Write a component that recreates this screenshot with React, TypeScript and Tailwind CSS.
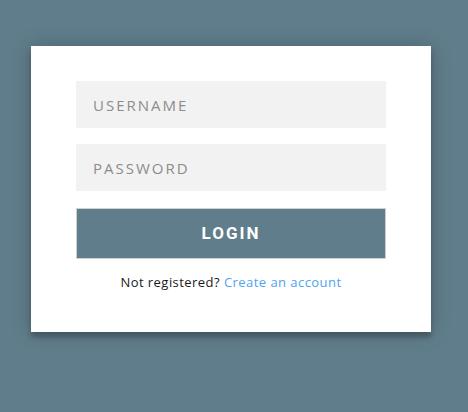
export default function App() {
  return (
    <div className="min-h-[412px] w-full bg-[#607d8b] pl-[31px] pt-[46px]">
      <div className="w-[400px] bg-white px-[45px] pt-[35px] pb-[39px] shadow-[0_0_20px_0_rgba(0,0,0,0.2),0_5px_5px_0_rgba(0,0,0,0.24)]">
        <form className="flex flex-col" onSubmit={(e) => e.preventDefault()}>
          <input
            type="text"
            placeholder="USERNAME"
            className="h-[47px] w-full bg-[#f2f2f2] px-[17px] text-[15px] tracking-[2px] text-[#333] outline-none placeholder:text-[#8c8c8c] [font-family:'Open_Sans',sans-serif]"
          />
          <input
            type="password"
            placeholder="PASSWORD"
            className="mt-4 h-[47px] w-full bg-[#f2f2f2] px-[17px] text-[15px] tracking-[2px] text-[#333] outline-none placeholder:text-[#8c8c8c] [font-family:'Open_Sans',sans-serif]"
          />
          <button
            type="submit"
            className="mt-[17px] h-[51px] w-full border border-[#cfcfcf] bg-[#607d8b] text-[17px] font-bold tracking-[2px] text-white [font-family:Roboto,sans-serif]"
          >
            LOGIN
          </button>
          <p className="mt-[14px] text-center text-[13px] tracking-[0.45px] text-[#1a1a1a] [font-family:'Open_Sans',sans-serif]">
            Not registered?{" "}
            <a href="#" className="text-[#4da3f5]">
              Create an account
            </a>
          </p>
        </form>
      </div>
    </div>
  );
}
